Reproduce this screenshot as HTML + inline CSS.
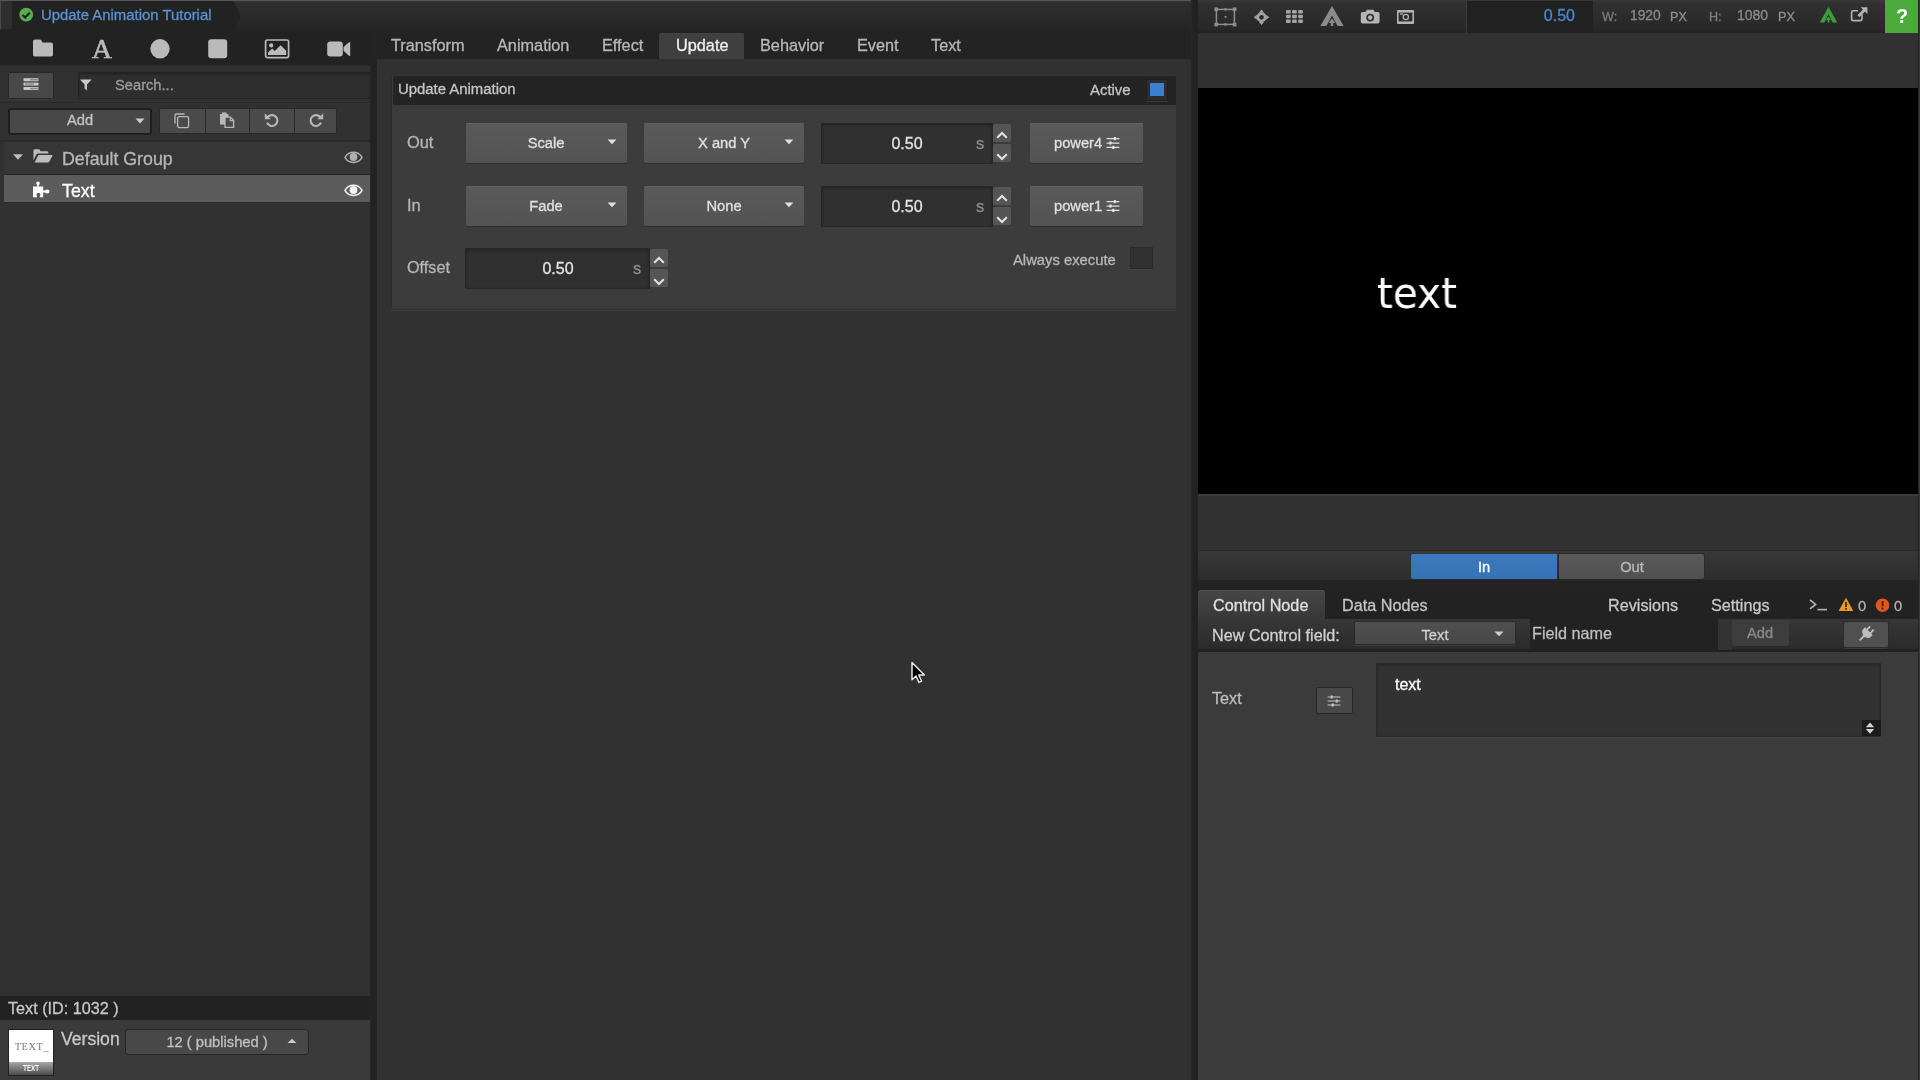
<!DOCTYPE html>
<html lang="en"><head><meta charset="utf-8"><title>Update Animation Tutorial</title>
<style>
html,body{margin:0;padding:0;background:#333;}
body{width:1920px;height:1080px;position:relative;overflow:hidden;font-family:"Liberation Sans",sans-serif;}
div,svg,.t{position:absolute;box-sizing:border-box;}
.t{line-height:1;white-space:nowrap;will-change:transform;-webkit-text-stroke:0.3px currentColor;}
svg{overflow:visible;}
</style></head>
<body>
<div style="left:0px;top:0px;width:370px;height:1080px;background:#313131"></div>
<div style="left:369.5px;top:32px;width:7.5px;height:1048px;background:linear-gradient(90deg,#2a2a2a 0,#222 1.5px,#222 70%,#262626 100%)"></div>
<div style="left:0px;top:0px;width:1197px;height:32px;background:linear-gradient(#3a3a3a 0,#2f2f2f 3px,#2a2a2a 50%,#252525 100%)"></div>
<div style="left:0px;top:0px;width:1920px;height:1px;background:#555"></div>
<svg style="left:0px;top:1px;" width="245" height="31" viewBox="0 0 245 31"><path d="M12 0 H233.5 L240.5 15.5 L233.5 31 H12 Z" fill="#222"/></svg>
<div style="left:0px;top:1px;width:12px;height:27.5px;background:#2e2e2e;border-left:1px solid #464b4b"></div>
<div style="left:0px;top:28.5px;width:12px;height:4px;background:#232323"></div>
<svg style="left:18px;top:7px;" width="16" height="16" viewBox="0 0 16 16"><circle cx="8.2" cy="7.7" r="6.9" fill="#56ad4c"/><path d="M4.6 8 L7.2 10.5 L11.8 5.6" stroke="#1c1c1c" stroke-width="2.1" fill="none"/></svg>
<span class="t" style="left:41px;top:7.55px;font-size:14.9px;color:#5a94d4;">Update Animation Tutorial</span>
<div style="left:0px;top:32px;width:370px;height:33px;background:#222"></div>
<svg style="left:32px;top:38px;" width="22" height="20" viewBox="0 0 22 20"><path d="M1 3.5 Q1 1.5 3 1.5 H7.5 Q9 1.5 9.6 2.8 L10.4 4.5 H19 Q21 4.5 21 6.5 V16.5 Q21 18.5 19 18.5 H3 Q1 18.5 1 16.5 Z" fill="#bababa"/></svg>
<span class="t" style="left:102.3px;transform:translateX(-50%);top:35.25px;font-size:27.5px;color:#bababa;font-family:'Liberation Serif',serif;-webkit-text-stroke:.7px;">A</span>
<svg style="left:149px;top:38px;" width="22" height="22" viewBox="0 0 22 22"><circle cx="11" cy="10.8" r="9.7" fill="#bababa"/></svg>
<svg style="left:207px;top:38px;" width="22" height="22" viewBox="0 0 22 22"><rect x="1.2" y="1.2" width="19" height="19" rx="3.2" fill="#bababa"/></svg>
<svg style="left:264px;top:38px;" width="26" height="22" viewBox="0 0 26 22"><rect x="1.6" y="2" width="23" height="17.6" rx="1.8" fill="none" stroke="#bababa" stroke-width="1.7"/><circle cx="7.2" cy="7.4" r="2.1" fill="#bababa"/><path d="M4 17 V14.5 L8.2 10.6 L10.8 13 L16.6 7.2 L22.2 12.8 V17 Z" fill="#bababa"/></svg>
<svg style="left:326px;top:38px;" width="26" height="22" viewBox="0 0 26 22"><rect x="1.2" y="3.4" width="15.6" height="15.2" rx="3" fill="#bababa"/><path d="M17.6 9 L23 4.2 Q24.2 3.6 24.2 5 V17 Q24.2 18.4 23 17.8 L17.6 13 Z" fill="#bababa"/></svg>
<div style="left:0px;top:65px;width:370px;height:1px;background:#2c2c2c"></div>
<div style="left:7.5px;top:72px;width:46px;height:26.5px;background:#484848;border:1px solid #262626;border-radius:2px;box-shadow:0 1px 0 #3d3d3d"></div>
<svg style="left:22px;top:77px;" width="18" height="16" viewBox="0 0 18 16"><g fill="#c8c8c8"><rect x="1.5" y="1.2" width="15" height="3"/><rect x="1.5" y="5.6" width="15" height="3"/><rect x="1.5" y="10" width="15" height="3"/></g><g fill="#8a8a8a"><rect x="8" y="2" width="8" height="1.4"/><rect x="3" y="6.4" width="9" height="1.4"/><rect x="8" y="10.8" width="8" height="1.4"/></g></svg>
<div style="left:77.5px;top:71.5px;width:292.5px;height:27px;background:#2e2e2e;border:1px solid #242424;border-right:none;border-radius:3px 0 0 3px;box-shadow:inset 0 1px 2px rgba(0,0,0,.3)"></div>
<svg style="left:79px;top:78px;" width="14" height="14" viewBox="0 0 14 14"><path d="M1 1.6 H12.6 L8 6.6 V12.6 L5.6 10.4 V6.6 Z" fill="#c8c8c8"/></svg>
<span class="t" style="left:115px;top:77.65px;font-size:14.7px;color:#9e9e9e;">Search...</span>
<div style="left:0px;top:102px;width:370px;height:1px;background:#2a2a2a"></div>
<div style="left:7.5px;top:107.5px;width:144.5px;height:27px;background:#484848;border:2px solid #1f1f1f;border-radius:3px"></div>
<span class="t" style="left:79.5px;transform:translateX(-50%);top:112.65px;font-size:14.7px;color:#c4c4c4;">Add</span>
<svg style="left:134px;top:117px;" width="12" height="8" viewBox="0 0 12 8"><path d="M1.5 1.5 H10.5 L6 6.5 Z" fill="#ccc"/></svg>
<div style="left:159px;top:108px;width:178px;height:26px;background:#4a4a4a;border:1px solid #2a2a2a;border-radius:2px"></div>
<div style="left:204.5px;top:108px;width:1px;height:26px;background:#2a2a2a"></div>
<div style="left:249px;top:108px;width:1px;height:26px;background:#2a2a2a"></div>
<div style="left:293.5px;top:108px;width:1px;height:26px;background:#2a2a2a"></div>
<svg style="left:173px;top:112px;" width="18" height="18" viewBox="0 0 18 18"><rect x="4.6" y="4.6" width="11" height="11" rx="1.6" fill="#4a4a4a" stroke="#b8b8b8" stroke-width="1.3"/><path d="M2 11.6 V3.4 Q2 2 3.4 2 H11.6" fill="none" stroke="#b8b8b8" stroke-width="1.3"/></svg>
<svg style="left:218px;top:111px;" width="18" height="18" viewBox="0 0 18 18"><path d="M2 3 H10.5 V13.6 H2 Z" fill="#b8b8b8"/><path d="M7 6.2 H12.6 L15.6 9.2 V16.4 H7 Z" fill="#4a4a4a" stroke="#b8b8b8" stroke-width="1.3"/><path d="M12.2 6.4 V9.6 H15.4" fill="none" stroke="#b8b8b8" stroke-width="1.2"/><rect x="4" y="1.4" width="4.6" height="2.4" fill="#b8b8b8"/></svg>
<svg style="left:263px;top:111.3px;" width="18" height="18" viewBox="0 0 18 18"><path d="M4.6 6.4 A5.4 5.4 0 1 1 4 11.6" fill="none" stroke="#b8b8b8" stroke-width="2.1"/><path d="M1.8 2.2 V8.2 H7.8 Z" fill="#b8b8b8"/></svg>
<svg style="left:306.5px;top:111.3px;" width="18" height="18" viewBox="0 0 18 18"><path d="M13.4 6.4 A5.4 5.4 0 1 0 14 11.6" fill="none" stroke="#b8b8b8" stroke-width="2.1"/><path d="M16.2 2.2 V8.2 H10.2 Z" fill="#b8b8b8"/></svg>
<div style="left:0px;top:140px;width:370px;height:2px;background:#2b2b2b"></div>
<div style="left:4px;top:142px;width:366px;height:32px;background:#363636"></div>
<div style="left:4px;top:174px;width:366px;height:1px;background:#242424"></div>
<div style="left:4px;top:175px;width:366px;height:27px;background:#5c5c5c"></div>
<div style="left:4px;top:202px;width:366px;height:1px;background:#2c2c2c"></div>
<svg style="left:12px;top:153px;" width="12" height="8" viewBox="0 0 12 8"><path d="M1 1.2 H11 L6 6.8 Z" fill="#bdbdbd"/></svg>
<svg style="left:32px;top:147.2px;" width="22" height="18" viewBox="0 0 22 18"><path d="M1.5 13.5 V3.6 Q1.5 2.2 2.9 2.2 H6.6 Q7.6 2.2 8 3.2 L8.4 4.2 H15 Q16.4 4.2 16.4 5.6 V6.6 H6 Q4.8 6.6 4.2 7.8 Z" fill="#bdbdbd"/><path d="M6.4 8 H20 Q20.8 8 20.4 8.8 L17.4 14.6 Q17 15.4 16 15.4 H2.6 Z" fill="#bdbdbd"/></svg>
<span class="t" style="left:62px;top:151.10px;font-size:17.8px;color:#b8b8b8;">Default Group</span>
<svg style="left:32px;top:180.6px;" width="19" height="17" viewBox="0 0 19 17"><path d="M1 5.6 H5.2 V4 Q4.2 3.4 4.2 2.3 Q4.2 0.6 6 0.6 Q7.8 0.6 7.8 2.3 Q7.8 3.4 6.8 4 V5.6 H11.2 V9.4 H13 Q13.6 8.4 14.9 8.4 Q17.6 8.4 17.6 10.5 Q17.6 12.6 14.9 12.6 Q13.6 12.6 13 11.6 H11.2 V16.2 H7.8 V14.8 Q8.4 14.2 8.4 13.4 Q8.4 12 6.4 12 Q4.4 12 4.4 13.4 Q4.4 14.2 5 14.8 V16.2 H1 Z" fill="#fff"/></svg>
<span class="t" style="left:62px;top:183.10px;font-size:17.8px;color:#fff;">Text</span>
<svg style="left:344px;top:151.3px;" width="19" height="12" viewBox="0 0 19 12"><path d="M1 6.4 C4.4 -0.5 14.6 -0.5 18 6.4 C14.6 13.1 4.4 13.1 1 6.4 Z" fill="none" stroke="#b0b0b0" stroke-width="1.5"/><circle cx="9.5" cy="6" r="3.9" fill="#b0b0b0"/></svg>
<svg style="left:344px;top:184.4px;" width="19" height="12" viewBox="0 0 19 12"><path d="M1 6.4 C4.4 -0.5 14.6 -0.5 18 6.4 C14.6 13.1 4.4 13.1 1 6.4 Z" fill="none" stroke="#f4f4f4" stroke-width="1.5"/><circle cx="9.5" cy="6" r="3.9" fill="#f4f4f4"/></svg>
<div style="left:0px;top:996px;width:370px;height:24px;background:#222"></div>
<span class="t" style="left:8px;top:999.90px;font-size:16.2px;color:#c8c8c8;">Text (ID: 1032 )</span>
<div style="left:0px;top:1020px;width:370px;height:60px;background:#3a3a3a"></div>
<div style="left:7.5px;top:1029px;width:46.5px;height:46.5px;background:#fff;border:1px solid #222;overflow:hidden"><div style="left:0px;top:32px;width:46px;height:13px;background:linear-gradient(#a8a8a8,#4a4a4a)"></div><span class="t" style="left:23.5px;transform:translateX(-50%);top:12.30px;font-size:10.4px;color:#7c7c7c;font-family:'Liberation Serif',serif;letter-spacing:.6px;-webkit-text-stroke:0;">TEXT_</span><span class="t" style="left:22.3px;top:34.70px;font-size:8.2px;color:#fff;font-weight:bold;-webkit-text-stroke:0;transform:translateX(-50%) scaleX(.76);">TEXT</span></div>
<span class="t" style="left:60.5px;top:1031.20px;font-size:17.6px;color:#c8c8c8;">Version</span>
<div style="left:124.5px;top:1028.5px;width:184.5px;height:26px;background:#484848;border:1px solid #242424;border-radius:3px;box-sizing:border-box"></div>
<span class="t" style="left:217px;transform:translateX(-50%);top:1034.65px;font-size:14.7px;color:#c0c0c0;">12 ( published )</span>
<svg style="left:286px;top:1037px;" width="12" height="8" viewBox="0 0 12 8"><path d="M1.5 6 H10.5 L6 1.8 Z" fill="#ccc"/></svg>
<div style="left:377px;top:32px;width:814px;height:1048px;background:#313131"></div>
<div style="left:1191px;top:0px;width:7px;height:1080px;background:linear-gradient(90deg,#2a2a2a 0,#222 2px,#222 100%)"></div>
<div style="left:370px;top:32px;width:821px;height:27px;background:#232323"></div>
<div style="left:659px;top:33px;width:85px;height:26px;background:#3f3f3f;border-radius:2px 2px 0 0;box-shadow:inset 0 1px 0 #444"></div>
<span class="t" style="left:391px;top:36.85px;font-size:16.3px;color:#b8b8b8;">Transform</span>
<span class="t" style="left:497px;top:36.85px;font-size:16.3px;color:#b8b8b8;">Animation</span>
<span class="t" style="left:601.5px;top:36.85px;font-size:16.3px;color:#b8b8b8;">Effect</span>
<span class="t" style="left:675.5px;top:36.85px;font-size:16.3px;color:#f0f0f0;">Update</span>
<span class="t" style="left:760px;top:36.85px;font-size:16.3px;color:#b8b8b8;">Behavior</span>
<span class="t" style="left:856.5px;top:36.85px;font-size:16.3px;color:#b8b8b8;">Event</span>
<span class="t" style="left:931px;top:36.85px;font-size:16.3px;color:#b8b8b8;">Text</span>
<div style="left:391px;top:75px;width:785px;height:233.5px;background:#3c3c3c;border-left:1px solid #2c2c2c;border-top:1px solid #343434;"></div>
<div style="left:391px;top:310px;width:785px;height:1px;background:#3d3d3d"></div>
<div style="left:393px;top:76px;width:783px;height:29px;background:#242424"></div>
<span class="t" style="left:397.5px;top:81.55px;font-size:14.9px;color:#c6c6c6;">Update Animation</span>
<span class="t" style="left:1090px;top:82.55px;font-size:14.9px;color:#c6c6c6;">Active</span>
<div style="left:1146px;top:79px;width:22px;height:22px;background:#2c2c2c;border:1px solid #202020;box-sizing:border-box;box-shadow:0 1px 0 #3a3a3a"></div>
<div style="left:1150px;top:83px;width:14px;height:13px;background:#3a7fd0"></div>
<span class="t" style="left:407px;top:133.80px;font-size:16.4px;color:#b6b6b6;">Out</span>
<div style="left:466px;top:123px;width:161px;height:40px;background:linear-gradient(#5a5a5a,#535353);border-radius:2px;box-shadow:0 1px 0 #2e2e2e, inset 0 1px 0 #626262;"></div>
<span class="t" style="left:546.0px;transform:translateX(-50%);top:135.85px;font-size:14.7px;color:#e0e0e0;">Scale</span>
<svg style="left:606px;top:138.2px;" width="12" height="8" viewBox="0 0 12 8"><path d="M1.6 1.4 H10.4 L6 6.2 Z" fill="#e0e0e0"/></svg>
<div style="left:644px;top:123px;width:160px;height:40px;background:linear-gradient(#5a5a5a,#535353);border-radius:2px;box-shadow:0 1px 0 #2e2e2e, inset 0 1px 0 #626262;"></div>
<span class="t" style="left:723.5px;transform:translateX(-50%);top:135.85px;font-size:14.7px;color:#e0e0e0;">X and Y</span>
<svg style="left:783px;top:138.2px;" width="12" height="8" viewBox="0 0 12 8"><path d="M1.6 1.4 H10.4 L6 6.2 Z" fill="#e0e0e0"/></svg>
<div style="left:821px;top:123px;width:172px;height:41px;background:#303030;border:1px solid #272727;box-sizing:border-box;box-shadow:inset 0 1px 3px rgba(0,0,0,.35);"></div>
<span class="t" style="left:907px;transform:translateX(-50%);top:135.50px;font-size:16px;color:#e4e4e4;">0.50</span>
<span class="t" style="left:976px;top:134.75px;font-size:16.5px;color:#8c8c8c;">s</span>
<div style="left:993px;top:124.4px;width:17.6px;height:17.799999999999983px;background:#555;border-radius:1.5px"></div>
<div style="left:993px;top:144.4px;width:17.6px;height:18.099999999999994px;background:#555;border-radius:1.5px"></div>
<svg style="left:995.8px;top:131.2px;" width="12" height="8" viewBox="0 0 12 8"><path d="M1.2 6.8 L6 2 L10.8 6.8" fill="none" stroke="#e4e4e4" stroke-width="2"/></svg>
<svg style="left:995.8px;top:152.6px;" width="12" height="8" viewBox="0 0 12 8"><path d="M1.2 1.2 L6 6 L10.8 1.2" fill="none" stroke="#e4e4e4" stroke-width="2"/></svg>
<div style="left:1030px;top:123px;width:113px;height:40px;background:linear-gradient(#5a5a5a,#535353);border-radius:2px;box-shadow:0 1px 0 #2e2e2e, inset 0 1px 0 #626262;"></div>
<span class="t" style="left:1053.5px;top:135.65px;font-size:14.7px;color:#e0e0e0;">power4</span>
<svg style="left:1105.5px;top:136.2px;" width="14" height="14" viewBox="0 0 14 14"><g stroke="#e0e0e0" stroke-width="1.25"><path d="M0.6 2.6H13.4M0.6 7H13.4M0.6 11.4H13.4"/></g><g fill="#e0e0e0"><rect x="7.8" y="1" width="2.2" height="3.2"/><rect x="3.4" y="5.4" width="2.2" height="3.2"/><rect x="6.2" y="9.8" width="2.2" height="3.2"/></g></svg>
<span class="t" style="left:407px;top:196.80px;font-size:16.4px;color:#b6b6b6;">In</span>
<div style="left:466px;top:186px;width:161px;height:40px;background:linear-gradient(#5a5a5a,#535353);border-radius:2px;box-shadow:0 1px 0 #2e2e2e, inset 0 1px 0 #626262;"></div>
<span class="t" style="left:546.0px;transform:translateX(-50%);top:198.85px;font-size:14.7px;color:#e0e0e0;">Fade</span>
<svg style="left:606px;top:201.2px;" width="12" height="8" viewBox="0 0 12 8"><path d="M1.6 1.4 H10.4 L6 6.2 Z" fill="#e0e0e0"/></svg>
<div style="left:644px;top:186px;width:160px;height:40px;background:linear-gradient(#5a5a5a,#535353);border-radius:2px;box-shadow:0 1px 0 #2e2e2e, inset 0 1px 0 #626262;"></div>
<span class="t" style="left:723.5px;transform:translateX(-50%);top:198.85px;font-size:14.7px;color:#e0e0e0;">None</span>
<svg style="left:783px;top:201.2px;" width="12" height="8" viewBox="0 0 12 8"><path d="M1.6 1.4 H10.4 L6 6.2 Z" fill="#e0e0e0"/></svg>
<div style="left:821px;top:186px;width:172px;height:41px;background:#303030;border:1px solid #272727;box-sizing:border-box;box-shadow:inset 0 1px 3px rgba(0,0,0,.35);"></div>
<span class="t" style="left:907px;transform:translateX(-50%);top:198.50px;font-size:16px;color:#e4e4e4;">0.50</span>
<span class="t" style="left:976px;top:197.75px;font-size:16.5px;color:#8c8c8c;">s</span>
<div style="left:993px;top:187.4px;width:17.6px;height:17.799999999999983px;background:#555;border-radius:1.5px"></div>
<div style="left:993px;top:207.4px;width:17.6px;height:18.099999999999994px;background:#555;border-radius:1.5px"></div>
<svg style="left:995.8px;top:194.2px;" width="12" height="8" viewBox="0 0 12 8"><path d="M1.2 6.8 L6 2 L10.8 6.8" fill="none" stroke="#e4e4e4" stroke-width="2"/></svg>
<svg style="left:995.8px;top:215.6px;" width="12" height="8" viewBox="0 0 12 8"><path d="M1.2 1.2 L6 6 L10.8 1.2" fill="none" stroke="#e4e4e4" stroke-width="2"/></svg>
<div style="left:1030px;top:186px;width:113px;height:40px;background:linear-gradient(#5a5a5a,#535353);border-radius:2px;box-shadow:0 1px 0 #2e2e2e, inset 0 1px 0 #626262;"></div>
<span class="t" style="left:1053.5px;top:198.65px;font-size:14.7px;color:#e0e0e0;">power1</span>
<svg style="left:1105.5px;top:199.2px;" width="14" height="14" viewBox="0 0 14 14"><g stroke="#e0e0e0" stroke-width="1.25"><path d="M0.6 2.6H13.4M0.6 7H13.4M0.6 11.4H13.4"/></g><g fill="#e0e0e0"><rect x="7.8" y="1" width="2.2" height="3.2"/><rect x="3.4" y="5.4" width="2.2" height="3.2"/><rect x="6.2" y="9.8" width="2.2" height="3.2"/></g></svg>
<span class="t" style="left:407px;top:259.40px;font-size:16.2px;color:#b6b6b6;">Offset</span>
<div style="left:465px;top:248px;width:185px;height:41.3px;background:#303030;border:1px solid #272727;box-sizing:border-box;box-shadow:inset 0 1px 3px rgba(0,0,0,.35);"></div>
<span class="t" style="left:558px;transform:translateX(-50%);top:260.50px;font-size:16px;color:#e4e4e4;">0.50</span>
<span class="t" style="left:633px;top:259.75px;font-size:16.5px;color:#8c8c8c;">s</span>
<div style="left:650px;top:249.4px;width:17.6px;height:17.799999999999983px;background:#555;border-radius:1.5px"></div>
<div style="left:650px;top:269.4px;width:17.6px;height:18.100000000000023px;background:#555;border-radius:1.5px"></div>
<svg style="left:652.8px;top:256.2px;" width="12" height="8" viewBox="0 0 12 8"><path d="M1.2 6.8 L6 2 L10.8 6.8" fill="none" stroke="#e4e4e4" stroke-width="2"/></svg>
<svg style="left:652.8px;top:277.6px;" width="12" height="8" viewBox="0 0 12 8"><path d="M1.2 1.2 L6 6 L10.8 1.2" fill="none" stroke="#e4e4e4" stroke-width="2"/></svg>
<span class="t" style="left:1012.5px;top:252.60px;font-size:14.8px;color:#b8b8b8;">Always execute</span>
<div style="left:1130px;top:247px;width:22.5px;height:22px;background:#313131;border:1px solid #2a2a2a;box-shadow:0 1px 0 #454545"></div>
<svg style="left:909px;top:659.6px;" width="18" height="26" viewBox="0 0 18 26"><path d="M3 2.5 V19.8 L7.1 16 L9.9 22.4 L12.6 21.2 L9.8 15 H15.4 Z" fill="#000" stroke="#eee" stroke-width="1.4" stroke-linejoin="round"/></svg>
<div style="left:1198px;top:0px;width:722px;height:1080px;background:#313131"></div>
<div style="left:1198px;top:0px;width:722px;height:33px;background:linear-gradient(#3a3a3a 0,#303030 4px,#2b2b2b 60%,#272727 90%,#222 100%)"></div>
<div style="left:1466px;top:1px;width:127px;height:32px;background:#212121;border-left:1px solid #3c3c3c"></div>
<svg style="left:1213px;top:6px;" width="25" height="22" viewBox="0 0 25 22"><rect x="3.4" y="3.4" width="18" height="15" fill="none" stroke="#8e8e8e" stroke-width="1.5"/><g fill="#8e8e8e"><rect x="1.4" y="1.4" width="3.6" height="3.6"/><rect x="19.8" y="1.4" width="3.6" height="3.6"/><rect x="1.4" y="16.8" width="3.6" height="3.6"/><rect x="19.8" y="16.8" width="3.6" height="3.6"/><rect x="11.4" y="2.2" width="2" height="2.4"/><rect x="11.4" y="17.2" width="2" height="2.4"/><rect x="11.6" y="10" width="1.8" height="1.8"/></g></svg>
<svg style="left:1253px;top:9px;" width="17" height="17" viewBox="0 0 17 17"><circle cx="8.5" cy="8.3" r="3.7" fill="none" stroke="#a4a4a4" stroke-width="2.6"/><g fill="#a4a4a4"><path d="M8.5 0.6 L11 3.6 H6 Z"/><path d="M8.5 16 L11 13 H6 Z"/><path d="M0.8 8.3 L3.8 5.8 V10.8 Z"/><path d="M16.2 8.3 L13.2 5.8 V10.8 Z"/></g></svg>
<svg style="left:1285px;top:9px;" width="19" height="15" viewBox="0 0 19 15"><g fill="#a4a4a4"><rect x="1.0" y="1.0" width="4.7" height="3.5" rx=".6"/><rect x="1.0" y="5.7" width="4.7" height="3.5" rx=".6"/><rect x="1.0" y="10.4" width="4.7" height="3.5" rx=".6"/><rect x="7.1" y="1.0" width="4.7" height="3.5" rx=".6"/><rect x="7.1" y="5.7" width="4.7" height="3.5" rx=".6"/><rect x="7.1" y="10.4" width="4.7" height="3.5" rx=".6"/><rect x="13.2" y="1.0" width="4.7" height="3.5" rx=".6"/><rect x="13.2" y="5.7" width="4.7" height="3.5" rx=".6"/><rect x="13.2" y="10.4" width="4.7" height="3.5" rx=".6"/></g></svg>
<svg style="left:1319px;top:5px;" width="26" height="22" viewBox="0 0 26 22"><path d="M13 1 L24.6 21 H18.6 L13 10.4 L7.4 21 H1.4 Z" fill="#8c8c8c"/><path d="M13 13.4 L16.4 18 H14.2 V21 H11.8 V18 H9.6 Z" fill="#8c8c8c"/></svg>
<svg style="left:1360px;top:8px;" width="21" height="17" viewBox="0 0 21 17"><path d="M2.6 4 H5.6 L6.8 1.8 H13.6 L14.8 4 H17.8 Q19.6 4 19.6 5.8 V13.8 Q19.6 15.6 17.8 15.6 H2.6 Q0.8 15.6 0.8 13.8 V5.8 Q0.8 4 2.6 4 Z" fill="#b4b4b4"/><circle cx="10.2" cy="9.6" r="3.9" fill="#2b2b2b"/><circle cx="10.2" cy="9.6" r="2.3" fill="#b4b4b4"/></svg>
<svg style="left:1396px;top:9px;" width="19" height="16" viewBox="0 0 19 16"><rect x="1" y="1" width="17" height="14" rx="1" fill="#b4b4b4"/><rect x="2.6" y="3.6" width="13.8" height="8.8" fill="#2b2b2b"/><circle cx="9.8" cy="8" r="2.6" fill="none" stroke="#b4b4b4" stroke-width="1.3"/><rect x="4" y="4.4" width="3" height="1.3" fill="#b4b4b4"/></svg>
<span class="t" style="left:1574.5px;transform:translateX(-100%);top:8.00px;font-size:16px;color:#4a8ad4;">0.50</span>
<span class="t" style="left:1601.5px;top:11.20px;font-size:12.6px;color:#7c7c7c;">W:</span>
<span class="t" style="left:1629.5px;top:8.60px;font-size:13.8px;color:#8a8a8a;">1920</span>
<span class="t" style="left:1670px;top:11.20px;font-size:12.6px;color:#909090;">PX</span>
<span class="t" style="left:1709px;top:11.20px;font-size:12.6px;color:#7c7c7c;">H:</span>
<span class="t" style="left:1736.5px;top:8.00px;font-size:14px;color:#8c8c8c;">1080</span>
<span class="t" style="left:1777.5px;top:11.20px;font-size:12.6px;color:#909090;">PX</span>
<svg style="left:1819px;top:6px;" width="19" height="17" viewBox="0 0 19 17"><path d="M9.5 0.8 L18.2 16.4 H13.6 L9.5 8.2 L5.4 16.4 H0.8 Z" fill="#3f9a3a"/><path d="M9.5 10.6 L12 14 H10.4 V16.4 H8.6 V14 H7 Z" fill="#3f9a3a"/></svg>
<svg style="left:1850px;top:6px;" width="19" height="17" viewBox="0 0 19 17"><path d="M12 8.6 V13 Q12 14.6 10.4 14.6 H3.2 Q1.6 14.6 1.6 13 V6.4 Q1.6 4.8 3.2 4.8 H8" fill="none" stroke="#b4b4b4" stroke-width="1.6"/><path d="M10.6 1.2 H17.4 V8 L15 5.6 L9.4 11.2 L7.4 9.2 L13 3.6 Z" fill="#b4b4b4"/></svg>
<div style="left:1884.6px;top:0px;width:33.4px;height:33.2px;background:#4caa3c"></div>
<span class="t" style="left:1902px;transform:translateX(-50%);top:6.20px;font-size:20px;color:#fff;font-weight:bold;-webkit-text-stroke:0;">?</span>
<div style="left:1918px;top:0px;width:2px;height:1080px;background:linear-gradient(90deg,#262626 0,#262626 50%,#383838 50%)"></div>
<div style="left:1198px;top:88px;width:720px;height:406px;background:#000"></div>
<div style="left:1198px;top:494px;width:720px;height:1.5px;background:#383c3c"></div>
<span class="t" style="left:1417px;top:272.76px;font-size:42px;color:#fff;font-family:'DejaVu Sans',sans-serif;transform:translateX(-50%) scaleX(0.965);-webkit-text-stroke:0">text</span>
<div style="left:1198px;top:550px;width:720px;height:1px;background:#2a2a2a"></div>
<div style="left:1198px;top:551px;width:720px;height:29px;background:linear-gradient(#383838,#2c2c2c)"></div>
<div style="left:1198px;top:580px;width:720px;height:10px;background:#232323"></div>
<div style="left:1411px;top:554px;width:145.5px;height:25px;background:linear-gradient(#3c78bc,#3872b6);border-radius:2px 0 0 2px"></div>
<span class="t" style="left:1484px;transform:translateX(-50%);top:559.65px;font-size:14.7px;color:#fff;">In</span>
<div style="left:1559px;top:554px;width:145px;height:25px;background:linear-gradient(#5a5a5a,#505050);border-radius:0 2px 2px 0;box-shadow:0 0 0 1px #2a2a2a"></div>
<span class="t" style="left:1631.5px;transform:translateX(-50%);top:559.65px;font-size:14.7px;color:#b8b8b8;">Out</span>
<div style="left:1198px;top:590px;width:720px;height:29px;background:#222"></div>
<div style="left:1197.5px;top:589.8px;width:127.5px;height:29px;background:linear-gradient(#464646,#383838);border-radius:3px 3px 0 0;border-top:1px solid #4e4e4e"></div>
<span class="t" style="left:1213px;top:596.90px;font-size:16.2px;color:#e0e0e0;">Control Node</span>
<span class="t" style="left:1341.5px;top:596.90px;font-size:16.2px;color:#c4c4c4;">Data Nodes</span>
<span class="t" style="left:1608px;top:596.90px;font-size:16.2px;color:#c8c8c8;">Revisions</span>
<span class="t" style="left:1711px;top:596.90px;font-size:16.2px;color:#c8c8c8;">Settings</span>
<svg style="left:1808px;top:598px;" width="22" height="14" viewBox="0 0 22 14"><path d="M2 2 L7.6 6.4 L2 10.8" fill="none" stroke="#b4b4b4" stroke-width="1.6"/><path d="M9.4 11.6 H19" stroke="#b4b4b4" stroke-width="1.6"/></svg>
<svg style="left:1838px;top:597px;" width="16" height="15" viewBox="0 0 16 15"><path d="M8 0.8 L15.4 14 H0.6 Z" fill="#e89a24"/><rect x="7.1" y="5" width="1.8" height="5" fill="#3a2a10"/><rect x="7.1" y="11" width="1.8" height="1.7" fill="#3a2a10"/></svg>
<span class="t" style="left:1857.5px;top:598.65px;font-size:14.7px;color:#b4b4b4;">0</span>
<svg style="left:1875px;top:598px;" width="15" height="15" viewBox="0 0 15 15"><circle cx="7.5" cy="7.3" r="6.8" fill="#e2571e"/><rect x="6.6" y="3" width="1.9" height="5.4" fill="#5a1c08"/><rect x="6.6" y="9.6" width="1.9" height="1.9" fill="#5a1c08"/></svg>
<span class="t" style="left:1893.5px;top:598.65px;font-size:14.7px;color:#b4b4b4;">0</span>
<div style="left:1198px;top:618.5px;width:720px;height:31px;background:linear-gradient(#373737,#2a2a2a)"></div>
<div style="left:1198px;top:649.4px;width:720px;height:2.3px;background:#212121"></div>
<span class="t" style="left:1212px;top:626.90px;font-size:16.2px;color:#d0d0d0;">New Control field:</span>
<div style="left:1354px;top:621px;width:162px;height:24px;background:linear-gradient(#505050,#474747);border:1px solid #2a2a2a;box-sizing:border-box;border-radius:2px;box-shadow:0 1px 0 #3c3c3c"></div>
<span class="t" style="left:1434.5px;transform:translateX(-50%);top:627.65px;font-size:14.7px;color:#d0d0d0;">Text</span>
<svg style="left:1493px;top:630px;" width="12" height="8" viewBox="0 0 12 8"><path d="M1.4 1.4 H10.6 L6 6.2 Z" fill="#d0d0d0"/></svg>
<div style="left:1529.5px;top:619px;width:188.5px;height:30.5px;background:#222"></div>
<span class="t" style="left:1532px;top:624.90px;font-size:16.2px;color:#bdbdbd;">Field name</span>
<div style="left:1718px;top:619px;width:14px;height:31px;background:#333"></div>
<div style="left:1732px;top:620px;width:57px;height:26px;background:#3d3d3d;border-radius:2px;box-shadow:0 1px 0 #2a2a2a"></div>
<span class="t" style="left:1760px;transform:translateX(-50%);top:625.65px;font-size:14.7px;color:#8a8a8a;">Add</span>
<div style="left:1843.5px;top:622px;width:44.5px;height:24.6px;background:#505050;border-radius:2px;box-shadow:0 0 0 1px #2c2c2c,0 2px 0 #3a3a3a"></div>
<svg style="left:1857px;top:625px;" width="18" height="18" viewBox="0 0 18 18"><g transform="rotate(45 9 9)" fill="#bdbdbd"><rect x="5.6" y="0.6" width="1.9" height="5"/><rect x="10.5" y="0.6" width="1.9" height="5"/><path d="M3.6 5 H14.4 V7.4 Q14.4 11 10.2 11.6 V13 H7.8 V11.6 Q3.6 11 3.6 7.4 Z"/><rect x="8.1" y="12.4" width="1.8" height="5.6"/></g></svg>
<div style="left:1198px;top:651.5px;width:720px;height:429px;background:#3b3b3b"></div>
<span class="t" style="left:1212px;top:689.90px;font-size:16.2px;color:#bcbcbc;">Text</span>
<div style="left:1316px;top:686.5px;width:36.5px;height:27.5px;background:#484848;border:1px solid #262626;box-sizing:border-box;border-radius:2px"></div>
<svg style="left:1327px;top:694px;" width="14" height="14" viewBox="0 0 14 14"><g stroke="#c4c4c4" stroke-width="1.1"><path d="M0.6 3H13.4M0.6 7H13.4M0.6 11H13.4"/></g><g fill="#c4c4c4"><rect x="3.6" y="1.5" width="2.2" height="3"/><rect x="8.6" y="5.5" width="2.2" height="3"/><rect x="4.6" y="9.5" width="2.2" height="3"/></g></svg>
<div style="left:1376px;top:663px;width:505px;height:73.5px;background:#323232;border:1px solid #292929;box-shadow:inset 0 1px 3px rgba(0,0,0,.3),0 1px 0 #464646"></div>
<span class="t" style="left:1395px;top:676.50px;font-size:16px;color:#fff;">text</span>
<div style="left:1862px;top:720px;width:18.5px;height:16px;background:#1c1c1c"></div>
<svg style="left:1864px;top:721.6px;" width="12" height="12" viewBox="0 0 12 12"><path d="M6 0.4 L10.2 5.2 H1.8 Z" fill="#d4d4d4"/><path d="M6 11.8 L10.2 7 H1.8 Z" fill="#d4d4d4"/></svg>
</body></html>
